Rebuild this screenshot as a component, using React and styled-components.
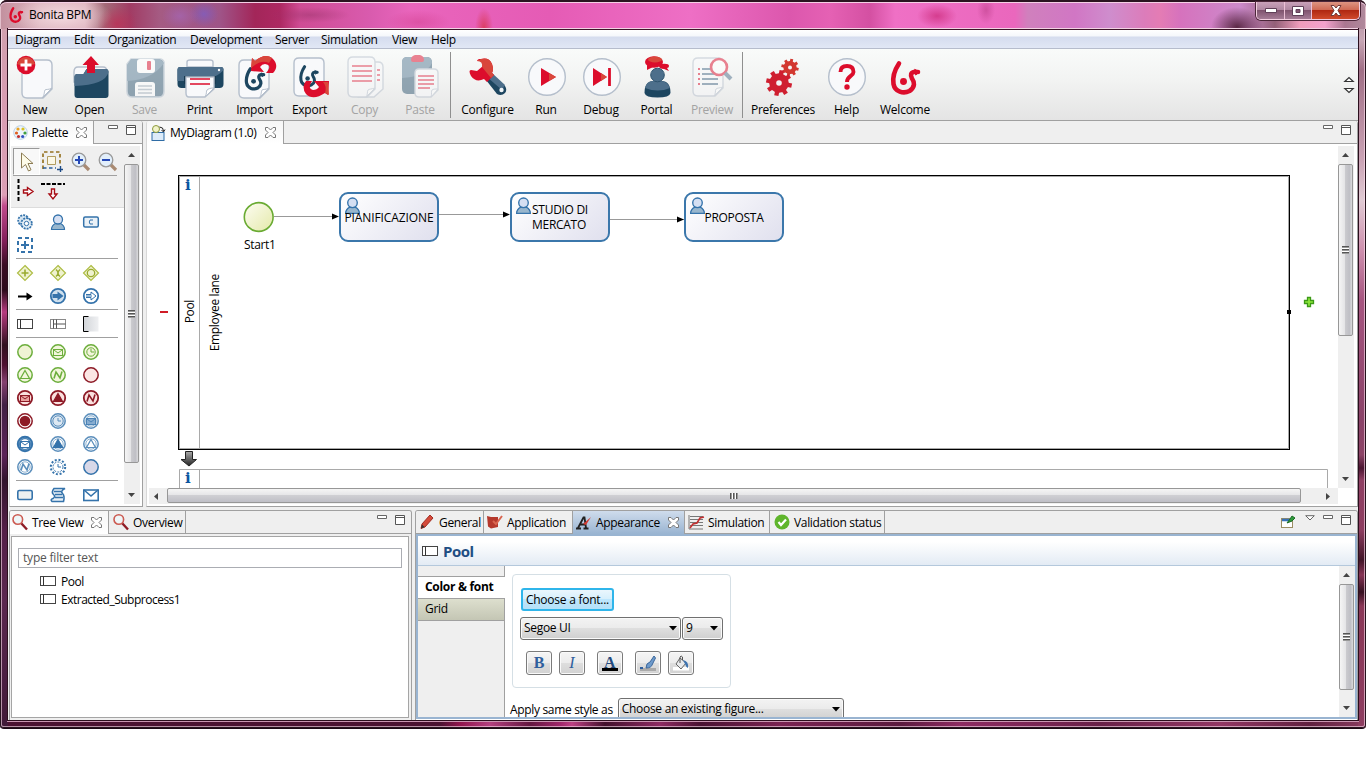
import React from "react";
import styled, { createGlobalStyle, css } from "styled-components";

const Global = createGlobalStyle`
  * { box-sizing: border-box; }
  body { margin: 0; background: #fff; overflow: hidden; font-family: "Open Sans", "Noto Sans", sans-serif; font-size: 12px; color: #000; }
  svg { display: block; flex: none; overflow: visible; }
`;

/* ---------- window frame ---------- */
const Window = styled.div`
  width: 1366px;
  height: 729px;
  display: flex;
  flex-direction: column;
  border-radius: 7px 7px 4px 4px;
  padding: 0 8px 8px;
  border-bottom: 1px solid #1c0714;
  box-shadow: inset 0 0 0 1px #25131d, inset 0 0 0 2px rgba(255, 225, 240, 0.6);
  background:
    linear-gradient(#cfa2ae 0, #d79db1 90px, #dca0b6 195px, #c04b8c 206px, #84205b 240px, #3a0d24 265px, #2c0a1b 290px, #b63b7f 312px, #30101f 345px, #4e1131 365px, #84406f 382px, #412045 405px, #5b2358 455px, #32142d 480px, #552048 530px, #5b2850 600px, #411a38 728px) 0 0 / 8px 100% no-repeat,
    linear-gradient(#b08a9c 0, #c7a7b5 40px, #a06f86 70px, #caa3b5 160px, #e0cbd4 200px, #ce90ae 250px, #a65580 300px, #8a4268 420px, #8c4366 455px, #4a1531 468px, #8f3f63 480px, #8d3d60 530px, #401427 560px, #863455 575px, #351020 592px, #8a3757 606px, #8d3d60 728px) 100% 0 / 8px 100% no-repeat,
    linear-gradient(90deg, #4b1231 0, #4b1231 440px, #91144d 460px, #b3407f 490px, #64163f 530px, #a0266a 560px, #bd4183 572px, #43102c 605px, #8e2b62 660px, #4a1232 700px, #7a2352 780px, #5b1a3e 900px, #8e2b62 960px, #692048 1100px, #933764 1220px, #60203f 1310px, #8a3c60 1366px);
`;
const TitleBar = styled.header`
  height: 29px;
  flex: none;
  margin: 0 -8px;
  padding: 0 6px 0 9px;
  display: flex;
  align-items: flex-start;
  border-radius: 7px 7px 0 0;
  border-top: 2px solid #2b1420;
  box-shadow: inset 0 1px 0 #f5cfe5, inset 1px 0 0 #e2bfcb, inset -1px 0 0 #e2bfcb;
  background:
    radial-gradient(ellipse 50px 20px at 62px 14px, rgba(248, 226, 230, 0.85), transparent),
    radial-gradient(ellipse 20px 18px at 117px 22px, rgba(190, 45, 85, 0.75), transparent),
    radial-gradient(ellipse 18px 13px at 180px 14px, rgba(165, 105, 190, 0.6), transparent),
    radial-gradient(ellipse 15px 13px at 204px 12px, rgba(120, 95, 205, 0.65), transparent),
    radial-gradient(ellipse 40px 8px at 310px 13px, rgba(150, 50, 105, 0.45), transparent),
    radial-gradient(ellipse 9px 20px at 484px 26px, rgba(215, 50, 70, 0.75), transparent),
    radial-gradient(ellipse 32px 12px at 418px 20px, rgba(214, 70, 150, 0.6), transparent),
    radial-gradient(ellipse 20px 12px at 937px 14px, rgba(205, 45, 125, 0.75), transparent),
    radial-gradient(ellipse 9px 14px at 986px 8px, rgba(190, 65, 140, 0.6), transparent),
    radial-gradient(ellipse 26px 20px at 1237px 25px, rgba(80, 30, 55, 0.9), transparent),
    linear-gradient(90deg, #c2909e 0, #dcb3bd 40px, #dcb0bc 85px, #a36a78 105px, #a13c64 130px, #a55b83 160px, #9f5488 220px, #a32659 255px, #ad2862 280px, #cf4c94 300px, #d95bae 370px, #e965bc 410px, #e55bb5 550px, #ee6fc5 690px, #dc57ad 790px, #e561b4 830px, #d450a2 870px, #ef70c5 895px, #ea67bd 1015px, #d080bd 1028px, #d176c4 1075px, #cf8dcd 1110px, #dc7cba 1145px, #e47cb4 1160px, #d672bd 1180px, #cc8acb 1240px, #946078 1275px, #ef9dbc 1300px, #f2a1cc 1325px, #aa7690 1345px, #b08a9c 1366px);
`;
const TitleText = styled.div`
  display: flex;
  gap: 6px;
  padding-top: 5px;
  line-height: 16px;
  flex: 1;
  letter-spacing: -0.3px;
`;
const WinButtons = styled.div`
  display: flex;
  height: 18px;
  border: 1px solid #f3cfe0;
  border-top: 0;
  border-radius: 0 0 5px 5px;
  box-shadow: 0 0 0 1px #4b2639;
  overflow: hidden;
`;
const WinButton = styled.div`
  width: ${(p) => p.$w}px;
  display: flex;
  justify-content: center;
  align-items: center;
  border-left: ${(p) => (p.$first ? 0 : 1)}px solid #ecc0d6;
  background: ${(p) =>
    p.$close
      ? "linear-gradient(#dd9482 0, #cf6a55 45%, #b02812 50%, #d04a2c 100%)"
      : "linear-gradient(#c9a1b9 0, #b088a2 45%, #80546f 50%, #a57c96 100%)"};
`;
const Client = styled.main`
  flex: 1;
  min-height: 0;
  display: flex;
  flex-direction: column;
  background: #efefef;
  border-top: 1px solid #3c1428;
  box-shadow: 0 -1px 0 #f3d3e4, 0 0 0 1px #2b0f1d, 0 1px 0 1px #c995b1;
`;

/* ---------- menu and toolbar ---------- */
const MenuBar = styled.nav`
  height: 19px;
  flex: none;
  display: flex;
  padding-left: 7px;
  line-height: 20px;
  letter-spacing: -0.3px;
  background: linear-gradient(#fff 0, #f5f7fb 6px, #d5dcee 7px, #e1e7f5 18px);
  border-bottom: 1px solid #b6bccc;
`;
const MenuItem = styled.span`
  width: ${(p) => p.$w}px;
  white-space: nowrap;
`;
const ToolBar = styled.div`
  height: 72px;
  flex: none;
  display: flex;
  align-items: flex-start;
  background: linear-gradient(#f9fbfa, #f2f3f2 45%, #e4e4e4);
  border-bottom: 1px solid #a0a0a0;
`;
const Tool = styled.div`
  width: ${(p) => p.$w}px;
  padding-top: 6px;
  display: flex;
  flex-direction: column;
  align-items: center;
  gap: 3px;
  line-height: 16px;
  white-space: nowrap;
  letter-spacing: -0.25px;
  color: ${(p) => (p.$off ? "#a3a3a3" : "#000")};
  svg { opacity: ${(p) => (p.$off ? 0.5 : 1)}; }
`;
const ToolSep = styled.div`
  width: 1px;
  height: 66px;
  margin: 3px ${(p) => p.$r}px 0 ${(p) => p.$l}px;
  background: #8f8f8f;
`;
const ToolScroll = styled.div`
  margin-left: auto;
  padding: 28px 4px 0 0;
`;

/* ---------- panels ---------- */
const TopArea = styled.div`
  display: flex;
  gap: 3px;
  height: 386px;
  flex: none;
  padding-left: 1px;
`;
const BottomArea = styled.div`
  display: flex;
  gap: 3px;
  flex: 1;
  padding: 3px 0 0 1px;
  min-height: 0;
`;
const Panel = styled.section`
  width: ${(p) => p.$w}px;
  flex: none;
  display: flex;
  flex-direction: column;
  border: 1px solid #a0a0a0;
  border-left-color: ${(p) => (p.$plain ? "#d8d8d8" : "#a0a0a0")};
  border-top-width: ${(p) => (p.$plain ? 0 : 1)}px;
  border-bottom-width: ${(p) => (p.$open ? 0 : 1)}px;
  border-radius: 3px 3px 0 0;
  background: ${(p) => p.$bg || "#fff"};
  overflow: hidden;
`;
const TabStrip = styled.div`
  display: flex;
  flex: none;
  height: 23px;
  background: linear-gradient(#a0a0a0, #a0a0a0) 0 100% / 100% 1px no-repeat #efefef;
`;
const Tab = styled.div`
  width: ${(p) => p.$w}px;
  height: ${(p) => (p.$on ? 23 : 22)}px;
  flex: none;
  display: flex;
  align-items: center;
  gap: ${(p) => p.$gap || 4}px;
  padding-left: ${(p) => p.$pl || 3}px;
  border-right: 1px solid #a0a0a0;
  white-space: nowrap;
  letter-spacing: -0.33px;
  background: ${(p) => (p.$blue ? "linear-gradient(#cfdcec, #99b4d1)" : p.$on ? "linear-gradient(#f6f6f6, #fff)" : "transparent")};
  svg:last-child { margin-left: ${(p) => (p.$closable ? 4 : 0)}px; }
`;
const TabTools = styled.div`
  margin-left: auto;
  display: flex;
  gap: ${(p) => p.$gap || 8}px;
  padding: 4px ${(p) => p.$pr || 6}px 0 0;
`;

/* ---------- scroll bars ---------- */
const Bar = styled.div`
  flex: none;
  display: flex;
  flex-direction: ${(p) => (p.$h ? "row" : "column")};
  ${(p) => (p.$h ? css`height: 16px; width: ${p.$len}px;` : css`width: 16px; height: ${p.$len}px;`)}
  background: #efefef;
`;
const BarArrow = styled.div`
  flex: none;
  width: ${(p) => (p.$h ? 18 : 16)}px;
  height: ${(p) => (p.$h ? 16 : 18)}px;
  display: flex;
  align-items: center;
  justify-content: center;
`;
const Thumb = styled.div`
  flex: none;
  display: flex;
  align-items: center;
  justify-content: center;
  border: 1px solid #979797;
  border-radius: 2px;
  ${(p) =>
    p.$h
      ? css`width: ${p.$size}px; height: 15px; background: linear-gradient(#f5f5f5, #e6e6e8 45%, #cfcfd3 50%, #bfbfc6);`
      : css`height: ${p.$size}px; width: 15px; background: linear-gradient(90deg, #f5f5f5, #e4e4e6 45%, #cacace 50%, #bfbfc5 80%, #dadadc);`}
`;
const Grip = styled.div`
  ${(p) =>
    p.$h
      ? css`width: 8px; height: 6px; background: repeating-linear-gradient(90deg, #555 0 1px, #999 1px 2px, #fff 2px 3px);`
      : css`height: 8px; width: 7px; background: repeating-linear-gradient(#555 0 1px, #999 1px 2px, #fff 2px 3px);`}
`;
const Spacer = styled.div`
  flex: 1;
`;
function Scroll({ h, len, size }) {
  return (
    <Bar $h={h} $len={len}>
      <BarArrow $h={h}>
        <svg width="8" height="7"><path d={h ? "M4 0v7L0 3.500z" : "M0 5h7L3.500 1z"} fill="#444" /></svg>
      </BarArrow>
      <Thumb $h={h} $size={size}><Grip $h={h} /></Thumb>
      <Spacer />
      <BarArrow $h={h}>
        <svg width="8" height="7"><path d={h ? "M1 0v7l4-3.500z" : "M0 1h7L3.500 5z"} fill="#444" /></svg>
      </BarArrow>
    </Bar>
  );
}

/* ---------- palette ---------- */
const PaletteBody = styled.div`
  display: flex;
  padding: 2px 0 0 1px;
  height: 360px;
`;
const PaletteCol = styled.div`
  width: 113px;
  overflow: hidden;
`;
const PaletteTools = styled.div`
  height: 62px;
  background: #efefef;
  border-bottom: 1px solid #dcdcdc;
  padding: 2px 0 0 2px;
`;
const ToolRow = styled.div`
  display: flex;
  height: 28px;
  width: 104px;
  border-bottom: ${(p) => (p.$line ? 1 : 0)}px solid #a0a0a0;
  margin-left: ${(p) => (p.$line ? 0 : 4)}px;
  gap: ${(p) => (p.$line ? 0 : 6)}px;
`;
const ToolCell = styled.div`
  width: 27px;
  height: 27px;
  flex: none;
  display: flex;
  align-items: center;
  justify-content: center;
  ${(p) => p.$on && css`background: #f8f8f8; border: 1px solid #999; border-right-color: #fff; border-bottom-color: #fff;`}
`;
const PaletteSection = styled.div`
  margin: 0 0 0 5px;
  width: 102px;
  padding: 2px 0 2px 1px;
  display: grid;
  grid-template-columns: repeat(3, 33px);
  grid-auto-rows: 23px;
  border-top: 1px solid ${(p) => (p.$first ? "transparent" : "#a0a0a0")};
  margin-top: ${(p) => (p.$first ? -1 : 0)}px;
`;
const Cell = styled.div`
  padding-top: 4px;
`;

/* ---------- diagram ---------- */
const EditorBody = styled.div`
  display: flex;
  flex-direction: column;
  padding: 2px 0 0 0;
`;
const EditorRow = styled.div`
  display: flex;
  height: 342px;
`;
const Canvas = styled.div`
  position: relative;
  width: 1191px;
  height: 342px;
  overflow: hidden;
`;
const CanvasLines = styled.svg`
  position: absolute;
  left: 0;
  top: 0;
`;
const Task = styled.div`
  position: absolute;
  left: ${(p) => p.$x}px;
  top: 46px;
  width: 100px;
  height: 50px;
  border: 2px solid #3b77ab;
  border-radius: 9px;
  background: linear-gradient(135deg, #fff, #e0e0ee);
  display: flex;
  align-items: center;
  justify-content: center;
  line-height: 15px;
  letter-spacing: ${(p) => p.$ls}px;
  white-space: pre;
  svg { position: absolute; left: 3px; top: 3px; }
  span { position: relative; }
`;
const CanvasText = styled.div`
  position: absolute;
  left: ${(p) => p.$x}px;
  top: ${(p) => p.$y}px;
  line-height: 16px;
  letter-spacing: -0.35px;
  white-space: nowrap;
  ${(p) => p.$vertical && css`writing-mode: vertical-rl; transform: rotate(180deg);`}
`;
const InfoMark = styled.div`
  position: absolute;
  left: 38px;
  top: ${(p) => p.$y}px;
  font: bold 15px/16px "DejaVu Serif", serif;
  color: #0b55a0;
`;

/* ---------- tree ---------- */
const TreeBox = styled.div`
  margin: 2px 2px 2px 1px;
  flex: 1;
  border: 1px solid #a5a5a5;
  background: #fff;
  padding: 11px 6px;
  letter-spacing: -0.5px;
`;
const Filter = styled.div`
  height: 20px;
  border: 1px solid #abadb3;
  padding-left: 4px;
  line-height: 18px;
  color: #555;
  letter-spacing: -0.2px;
  margin-bottom: 4px;
`;
const TreeRow = styled.div`
  height: 18px;
  padding-left: 22px;
  display: flex;
  align-items: center;
  gap: 5px;
`;

/* ---------- properties ---------- */
const PropFrame = styled.div`
  flex: 1;
  min-height: 0;
  border: 2px solid #99b4d1;
  display: flex;
  flex-direction: column;
  background: #fff;
  margin-bottom: 1px;
`;
const PropHead = styled.div`
  height: 30px;
  flex: none;
  display: flex;
  align-items: center;
  gap: 5px;
  padding: 0 0 0 4px;
  font-size: 15px;
  font-weight: 700;
  letter-spacing: -0.5px;
  color: #1f4e83;
  background: linear-gradient(#fff 20%, #e3ebf4);
  border-bottom: 1px solid #b4c8dc;
`;
const PropBody = styled.div`
  display: flex;
  flex: 1;
  min-height: 0;
  overflow: hidden;
`;
const SideTabs = styled.div`
  width: 87px;
  flex: none;
  padding-top: 10px;
  background: linear-gradient(#a0a0a0, #a0a0a0) 100% 0 / 1px 100% no-repeat #efefef;
`;
const SideTab = styled.div`
  height: 22px;
  border-top: 1px solid #a0a0a0;
  padding-left: 7px;
  line-height: 20px;
  font-weight: ${(p) => (p.$on ? 700 : 400)};
  letter-spacing: -0.3px;
  background: ${(p) => (p.$on ? "#fff" : "linear-gradient(#dddfce, #c4c6b4) 0 0 / 86px 100% no-repeat")};
  box-shadow: 0 1px 0 #a0a0a0;
`;
const PropMain = styled.div`
  flex: 1;
  padding: 8px 0 0 7px;
`;
const Group = styled.div`
  width: 219px;
  height: 114px;
  border: 1px solid #d5dfe5;
  border-radius: 4px;
  padding: 13px 7px 0;
`;
const FontButton = styled.div`
  width: 93px;
  height: 23px;
  margin: 0 0 6px 1px;
  border: 2px solid #2fb5ea;
  border-radius: 3px;
  background: linear-gradient(#eaf6fd, #d6effc 48%, #bde6fd 50%, #b5e0f7);
  line-height: 19px;
  text-align: center;
  letter-spacing: -0.25px;
  white-space: nowrap;
`;
const Row = styled.div`
  display: flex;
  align-items: center;
  gap: ${(p) => p.$gap || 0}px;
  margin: ${(p) => p.$m || 0};
  white-space: nowrap;
  line-height: 14px;
  letter-spacing: -0.33px;
`;
const Combo = styled.div`
  width: ${(p) => p.$w}px;
  height: 23px;
  flex: none;
  border: 1px solid #707070;
  border-radius: 3px;
  background: linear-gradient(#f3f3f3, #ebebeb 48%, #dedede 50%, #cfcfcf);
  box-shadow: inset 0 0 0 1px #fafafa;
  display: flex;
  justify-content: space-between;
  align-items: center;
  padding: 0 ${(p) => p.$pr || 3}px 1px 3px;
  letter-spacing: -0.3px;
`;
const IconButton = styled.div`
  width: 26px;
  height: 24px;
  margin-left: ${(p) => p.$ml}px;
  border: 1px solid #7b7b7b;
  border-radius: 3px;
  background: linear-gradient(#f5f5f5, #ececec 48%, #dedede 50%, #d2d2d2);
  box-shadow: inset 0 0 0 1px #fafafa;
  display: flex;
  align-items: center;
  justify-content: center;
  font: ${(p) => (p.$italic ? "italic" : "bold")} 16px/20px "Liberation Serif", serif;
  letter-spacing: 0;
  color: #2f5f9e;
`;

/* ---------- icons ---------- */
const RED = "#dc0d2c";
const NAVY = "#1d4660";
const SLATE = "#4d6f8b";
const PAGE = { fill: "#f8f9fb", stroke: "#b5bfcc", strokeWidth: 1.4 };

const Swirl = ({ c, w = 3.4 }) => (
  <g fill="none" stroke={c} strokeWidth={w} strokeLinecap="round" strokeLinejoin="round">
    <path d="M7 2.500C2 10 .5 17 1.500 23c1.500 8 10 10 16 7 6-4 5-9 2.500-12.500-2-3.500-1-6 2-6.500h4" />
    <path d="M23 8.500l4.500 2.300-3.500 3z" fill={c} strokeWidth="1" />
    <circle cx="11.500" cy="20.500" r={w * 0.75} fill={c} stroke="none" />
  </g>
);
const Gear = ({ x, y, r, hole, fill }) => (
  <g transform={`translate(${x} ${y})`} fill={fill}>
    {[0, 45, 90, 135].map((a) => (
      <rect key={a} x={-r * 0.22} y={-r * 1.32} width={r * 0.44} height={r * 2.64} transform={`rotate(${a + 12})`} />
    ))}
    <circle r={r} />
    <circle r={hole} fill="#f3f3f3" />
  </g>
);
const TOOL_ICONS = {
  New: (
    <>
      <path d="M14 5h20q5 0 5 5v24l-9 9H14q-5 0-5-5V10q0-5 5-5z" {...PAGE} />
      <path d="M39 33c-3 2-6 1-7 2s0 5-3 8z" fill="#fff" stroke="#b5bfcc" />
      <circle cx="13" cy="10" r="9.300" fill={RED} /><path d="M4 9a9.300 9.300 0 0 1 18 0q-10 4-18 0z" fill="#d9473b" />
      <path d="M7.500 10h11M13 4.500v11" stroke="#fff" strokeWidth="2.800" />
    </>
  ),
  Open: (
    <>
      <path d="M6 17q0-5 4-5h25q4 0 4 5v10H6z" {...PAGE} />
      <path d="M6.500 22q0-3 3-3h6l3-5h19q3 0 3 3v23q0 3-3 3h-28q-3 0-3-3z" fill={NAVY} />
      <path d="M6.500 22q0-3 3-3h6l3-5h19q3 0 3 3-3 13-34 14z" fill={SLATE} />
      <path d="M19 18V10h-4.500L23 1l8 9h-4v8z" fill={RED} />
    </>
  ),
  Save: (
    <>
      <path d="M8 4h29q3 0 4 3v29q0 6-5 6H9q-5 0-5-6V9z" fill="#315872" stroke="#a9b9c8" strokeWidth="1.500" />
      <path d="M4 10l4-6h29l4 4q-12 17-37 18z" fill="#577a94" />
      <rect x="14" y="4" width="18" height="14" rx="3" fill="#fff" /><rect x="24" y="6" width="4" height="9" rx="1" fill={RED} />
      <path d="M12 41V30q0-3 3-3h14q3 0 3 3v11z" fill="#fff" /><path d="M15 31h14M15 34.500h14M15 38h14" stroke="#9ba9b6" strokeWidth="1.300" />
    </>
  ),
  Print: (
    <>
      <path d="M9 12V7q0-2 3-2h20q3 0 3 2v5z" {...PAGE} />
      <path d="M2 12h41q2.500 0 2.500 3v14q0 4-4 4h-38q-4 0-4-4V15q0-3 2.500-3z" fill={NAVY} />
      <path d="M2 12h41q2.500 0 2.500 3c-8 10-26 11-46 11V15q0-3 2.500-3z" fill={SLATE} />
      <circle cx="41" cy="15" r="1.200" fill="#fff" />
      <path d="M6 21h32v8H6z" fill="#173a51" />
      <path d="M8 22h28v12l-9 8H11q-3 0-3-4z" {...PAGE} /><path d="M36 33c-4 0-6 1-7 2s0 4-2 7z" fill="#fff" stroke="#b5bfcc" />
      <path d="M12 24h20M12 29h20" stroke={RED} strokeWidth="1.500" />
    </>
  ),
  Import: (
    <>
      <path d="M11 5h20q5 0 5 5v24l-9 9H11q-5 0-5-5V10q0-5 5-5z" {...PAGE} />
      <path d="M36 33c-3 2-6 1-7 2s0 5-3 8z" fill="#fff" stroke="#b5bfcc" />
      <g transform="translate(12.500 12) scale(.7)"><Swirl c={NAVY} w={4.600} /></g>
      <path d="M19 3l3 3Q32-2 39 3c6 5 5 11 1 15h-7q7-8-1-9-3 0-5 3l4 5-13-1z" fill={RED} />
      <path d="M19 3l3 3Q32-2 39 3l-3 5q-8-4-18 5z" fill="#d9473b" />
    </>
  ),
  Export: (
    <>
      <path d="M11 3h20q5 0 5 5v24l-9 9H11q-5 0-5-5V8q0-5 5-5z" {...PAGE} />
      <g transform="translate(12 10) scale(.66)"><Swirl c={NAVY} w={4.600} /></g>
      <path d="M40 40l-3-2Q25 46 18 39q-5-7 0-13h6q-5 8 1 9 4 0 6-3l-5-6h15z" fill={RED} />
      <path d="M40 27l1 13-4-2q2-7-2-11z" fill="#d9473b" />
    </>
  ),
  Copy: (
    <>
      <path d="M15 7h20q5 0 5 5v22l-9 8H15z" {...PAGE} />
      <path d="M10 2h17q5 0 5 5v27l-8 8H10q-5 0-5-5V7q0-5 5-5z" {...PAGE} />
      <path d="M32 33c-3 1-6 1-7 2s0 5-2 7z" fill="#fff" stroke="#b5bfcc" />
      <path d="M9 11h20M9 16h20M9 21h20M9 26h20M34 15h3M34 20h3M34 25h3" stroke={RED} strokeWidth="1.600" />
    </>
  ),
  Paste: (
    <>
      <rect x="4" y="2" width="30" height="37" rx="5" fill="#315872" /><path d="M4 7q0-5 5-5h20q5 0 5 6-7 14-30 15z" fill="#577a94" />
      <path d="M13 5q0-4 4-5h5q4 1 4 5 0 2-2 2h-9q-2 0-2-2z" fill={RED} />
      <path d="M21 14h15q4 0 4 4v17l-7 7H21q-4 0-4-4V18q0-4 4-4z" {...PAGE} />
      <path d="M40 34c-3 0-5 0-6 1s0 4-1 7z" fill="#fff" stroke="#b5bfcc" />
      <path d="M20 21h16M20 25h16M20 29h16M20 33h12" stroke={RED} strokeWidth="1.500" />
    </>
  ),
  Configure: (
    <>
      <path d="M20 25l6-6 13 12q2.500 4 0 7-3.500 3.500-8 1z" fill={NAVY} /><path d="M21 22l5-4 13 12-3 5z" fill={SLATE} />
      <path d="M15 4q8-2 11 5 2 6 0 9l2 2-7 7-3-3q-8 4-13-3-3-6 0-6l6 1 6-5q1-6-6-5 0-1 2-2z" fill={RED} />
      <path d="M15 4q8-2 11 5 2 6 0 9l2 2-3 3-9-11q1-6-5-6z" fill="#d9473b" />
      <circle cx="35.500" cy="35" r="2.200" fill="#eef3f6" />
    </>
  ),
  Run: (
    <><circle cx="23" cy="22" r="18.300" fill="#f8f9fb" stroke="#b5bfcc" strokeWidth="1.400" /><path d="M17 13v18l15-9z" fill={RED} /><path d="M25 18v8l7-4z" fill="#d9473b" /></>
  ),
  Debug: (
    <><circle cx="23" cy="22" r="18.300" fill="#f8f9fb" stroke="#b5bfcc" strokeWidth="1.400" /><path d="M14 13v18l14-9z" fill={RED} /><path d="M22 18v8l6-4z" fill="#d9473b" /><path d="M30.500 13v18" stroke={RED} strokeWidth="2.800" /></>
  ),
  Portal: (
    <>
      <ellipse cx="19" cy="7" rx="9" ry="5.800" fill={RED} /><path d="M12 10l0 5 6-3zM26 9q8-1 8 2 0 2-2 2l2 3-5-2q-5 0-5-3z" fill={RED} /><ellipse cx="20" cy="4.500" rx="7" ry="3" fill="#d9473b" />
      <path d="M9.500 38q0-12 9-12h8q9 0 9 12-1 4.500-13 4.500T9.500 38z" fill={NAVY} /><path d="M10 33q2-7 8-7h8q6 0 9 7-12 5-25 0z" fill={SLATE} />
      <circle cx="22.500" cy="20" r="6.800" fill={SLATE} stroke="#2e536e" />
    </>
  ),
  Preview: (
    <>
      <path d="M8 3h20q5 0 5 5v25l-8 8H8q-5 0-5-5V8q0-5 5-5z" {...PAGE} /><path d="M33 32c-3 1-6 1-7 2s0 5-2 7z" fill="#fff" stroke="#b5bfcc" />
      <path d="M12 14h12M12 19h16M12 24h16M12 29h16" stroke={SLATE} strokeWidth="1.800" /><path d="M8 14h2M8 19h2M8 24h2M8 29h2" stroke={RED} strokeWidth="1.800" />
      <circle cx="29" cy="12" r="8" fill="#fff" stroke={RED} strokeWidth="2.600" /><path d="M35 18l6 6" stroke={SLATE} strokeWidth="4" />
    </>
  ),
  Preferences: (
    <><Gear x={29} y={12.500} r={6.600} hole={2} fill="#d2372f" /><Gear x={18} y={28} r={9.800} hole={2.800} fill="#cf1f30" /></>
  ),
  Help: (
    <><circle cx="22" cy="22" r="18.300" fill="#f8f9fb" stroke="#b5bfcc" strokeWidth="1.400" /><path d="M15.500 17q0-6 6.500-6t6.500 6c0 4-6.500 4-6.500 10" fill="none" stroke={RED} strokeWidth="3.900" /><circle cx="22" cy="32" r="2.700" fill={RED} /></>
  ),
  Welcome: <g transform="translate(9 6)"><Swirl c={RED} w={4.600} /></g>,
};

const G = "#6cae3c", R = "#8d1a26", B = "#3573ab";
const Ring = ({ c, f = "#fff", w = 1.500, dash }) => <circle cx="8" cy="8" r="7.200" fill={f} stroke={c} strokeWidth={w} strokeDasharray={dash} />;
const Mail = ({ c, f = "none" }) => <><rect x="3.500" y="5.500" width="9" height="6" fill={f} stroke={c} /><path d="M4 6l4 3L12 6" fill="none" stroke={c} /></>;
const Tri = ({ c, f = "none" }) => <path d="M8 3.500l4.500 8h-9z" fill={f} stroke={c} strokeWidth="1.200" />;
const Zig = ({ c }) => <path d="M4 11.500L6 5l4 6 2-6.500" fill="none" stroke={c} strokeWidth="1.600" />;
const Clock = ({ c }) => <><circle cx="8" cy="8" r="4.200" fill="none" stroke={c} /><path d="M8 8V5M8 8h3" stroke={c} /></>;
const Inner = ({ c }) => <circle cx="8" cy="8" r="5.200" fill="none" stroke={c} />;
const Person = () => (
  <><path d="M1.500 15.500c0-4 2-5 4-6h5c2 1 4 2 4 6z" fill="#98b6cd" stroke={B} strokeWidth="1.200" /><circle cx="8" cy="5.500" r="4.500" fill="#d5dff2" stroke={B} strokeWidth="1.300" /></>
);
const Diamond = ({ children }) => <><path d="M8 .5L15.500 8 8 15.500.5 8z" fill="#eff2cf" stroke="#aebd45" strokeWidth="1.200" />{children}</>;
const OLIVE = "#9aab30";
const P = {
  service: <><circle cx="6.500" cy="6.500" r="5.300" fill="#d5e4f0" stroke={B} strokeWidth="1.800" strokeDasharray="2 1" /><circle cx="9.500" cy="9.500" r="5.300" fill="#e2edf5" stroke={B} strokeWidth="1.800" strokeDasharray="2 1" /><circle cx="9.500" cy="9.500" r="2.200" fill="#fff" stroke={B} /></>,
  human: <Person />,
  call: <><rect x=".7" y="3" width="14.600" height="10" rx="1.500" fill="#eaf1f7" stroke={B} strokeWidth="1.500" /><path d="M10 6H7q-1.500 2 0 4h3" fill="none" stroke={B} /></>,
  sub: <><rect x="1" y="1" width="14" height="14" fill="none" stroke={B} strokeWidth="2" strokeDasharray="4 3" /><path d="M4 8h8M8 4v8" stroke={B} strokeWidth="2" /></>,
  and: <Diamond><path d="M4.500 8h7M8 4.500v7" stroke={OLIVE} strokeWidth="1.600" /></Diamond>,
  xor: <Diamond><path d="M6 4.500q4 3.500 0 7M10 4.500q-4 3.500 0 7" fill="none" stroke={OLIVE} strokeWidth="1.400" /></Diamond>,
  or: <Diamond><circle cx="8" cy="8" r="3.700" fill="none" stroke={OLIVE} strokeWidth="1.300" /></Diamond>,
  arrow: <path d="M1 7.500h8.500V4.500L15.500 8.500 9.500 12.500v-3H1z" fill="#000" />,
  throwLink: <><Ring c={B} f="#cfe0ee" w={1.800} /><path d="M2.500 6h5V3.500L13.500 8l-6 4.500V10h-5z" fill={B} /></>,
  catchLink: <><Ring c={B} w={1.800} /><path d="M3 6.500h5V4L13 8l-5 4V9.500H3M3 8h6" fill="none" stroke={B} /></>,
  pool: <><rect x=".5" y="3.500" width="15" height="9" fill="#fff" stroke="#444" /><path d="M3.500 3.500v9" stroke="#333" /></>,
  lane: <><rect x=".5" y="3.500" width="15" height="9" fill="#fff" stroke="#8a8a8a" /><path d="M3.500 3.500v9M6.500 3.500v9M3.500 8h12" stroke="#555" /></>,
  note: <><defs><linearGradient id="ng"><stop stopColor="#d2d5d9" /><stop offset="1" stopColor="#eff0f2" /></linearGradient></defs><rect x=".5" y=".5" width="15" height="15" fill="url(#ng)" /><path d="M5.500.5H.5v15h5" fill="none" stroke="#000" /></>,
  start: <Ring c={G} f="#f0f3d4" />,
  gMail: <><Ring c={G} f="#f3f6dc" /><Mail c={G} /></>,
  gClock: <><Ring c={G} f="#f3f6dc" /><Clock c={G} /></>,
  gSignal: <><Ring c={G} f="#f3f6dc" /><Tri c={G} /></>,
  gError: <><Ring c={G} f="#f3f6dc" /><Zig c={G} /></>,
  end: <Ring c={R} f="#fbe6e4" />,
  rMail: <><Ring c={R} f="#fae1df" w={1.800} /><Mail c={R} f="#e9a3a0" /></>,
  rSignal: <><Ring c={R} f="#fae1df" w={1.800} /><Tri c={R} f={R} /></>,
  rError: <><Ring c={R} f="#fae1df" w={1.800} /><Zig c={R} /></>,
  term: <><Ring c={R} /><circle cx="8" cy="8" r="5.300" fill={R} /></>,
  bClock: <><Ring c="#5b8ebb" f="#dde8f2" /><Inner c="#5b8ebb" /><path d="M8 8V5M8 8h3" stroke="#5b8ebb" /></>,
  bMail: <><Ring c="#5b8ebb" f="#e9f0f6" /><Inner c="#8fb3d2" /><Mail c="#4b83b6" f="#86acd0" /></>,
  bMail2: <><Ring c={B} f="#7ea8cc" w={2} /><circle cx="8" cy="8" r="5.400" fill="#fff" stroke={B} /><Mail c={B} /></>,
  bSigF: <><Ring c="#5b8ebb" /><Inner c="#8fb3d2" /><Tri c={B} f={B} /></>,
  bSig: <><Ring c="#5b8ebb" /><Inner c="#8fb3d2" /><Tri c="#5b8ebb" /></>,
  bErr: <><Ring c="#5b8ebb" /><Inner c="#8fb3d2" /><Zig c="#5b8ebb" /></>,
  bDash: <><Ring c={B} dash="2 1.800" w={2} /><circle cx="8" cy="8" r="5" fill="none" stroke={B} strokeDasharray="2 1.200" /><path d="M8 8V5M8 8h3" stroke={B} /></>,
  blank: <Ring c={B} f="#d8d8e8" />,
  rect: <rect x=".8" y="3.500" width="14.400" height="9" rx="1.500" fill="#edf1f1" stroke={B} strokeWidth="1.600" />,
  script: <><path d="M4 1.500h11q-5 2.500-2.500 5t1 8H2q-2-2 1-3 3-2 .500-4T4 1.500z" fill="#e9f1f7" stroke={B} strokeWidth="1.600" /><path d="M4 4.500h7M5 7.500h7M5 10.500h8" stroke={B} strokeWidth="1.300" /></>,
  send: <><rect x=".8" y="3" width="14.400" height="10.500" fill="#fff" stroke={B} strokeWidth="1.600" /><path d="M1 3l7 6 7-6" fill="none" stroke={B} strokeWidth="1.600" /></>,
};
const SECTIONS = [
  ["service", "human", "call", "sub"],
  ["and", "xor", "or", "arrow", "throwLink", "catchLink"],
  ["pool", "lane", "note"],
  ["start", "gMail", "gClock", "gSignal", "gError", "end", "rMail", "rSignal", "rError", "term", "bClock", "bMail", "bMail2", "bSigF", "bSig", "bErr", "bDash", "blank"],
  ["rect", "script", "send"],
];
const Ico = ({ children, s = 16 }) => <svg width={s} height={s} viewBox="0 0 16 16">{children}</svg>;

const CloseX = ({ c = "#777" }) => (
  <svg width="11" height="11"><path d="M.5.5h2.500L5.500 3 8 .5h2.500V3L8 5.500l2.500 2.500v2.500H8L5.500 8 3 10.500H.5V8L3 5.500.5 3z" fill="#fff" stroke={c} /></svg>
);
const MinIcon = () => <svg width="10" height="11"><path d="M.5.5h9v3h-9z" fill="#fff" stroke="#666" /></svg>;
const MaxIcon = () => <svg width="10" height="11"><path d="M.5.5h9v9h-9zM.5 2.500h9" fill="#fff" stroke="#555" /></svg>;
const Lens = () => (
  <svg width="16" height="17"><path d="M9 9l6 6.500" stroke="#8e1c26" strokeWidth="2.400" /><circle cx="5.800" cy="5.500" r="4.800" fill="#eef6f8" stroke="#cc5b52" strokeWidth="1.600" /></svg>
);
const Plus = ({ minus }) => (
  <svg width="20" height="20"><path d="M12 12l6 6" stroke="#a98a72" strokeWidth="3.200" /><circle cx="8" cy="8" r="6.800" fill="#e2effb" stroke="#999" strokeWidth="1.300" /><path d={minus ? "M4 8h8" : "M4 8h8M8 4v8"} stroke="#2548b5" strokeWidth="2" /></svg>
);
const Caret = () => <svg width="8" height="5"><path d="M0 0h8L4 4.500z" fill="#000" /></svg>;

const MENUS = [["Diagram", 59], ["Edit", 34], ["Organization", 82], ["Development", 85], ["Server", 46], ["Simulation", 71], ["View", 39], ["Help", 40]];
const TOOLS = [
  ["New", 54], ["Open", 55], ["Save", 55, 1], ["Print", 55], ["Import", 55], ["Export", 55], ["Copy", 55, 1], ["Paste", 56, 1],
  [null, 2, 3],
  ["Configure", 67], ["Run", 50], ["Debug", 60], ["Portal", 51], ["Preview", 60, 1],
  [null, 0, 0],
  ["Preferences", 80], ["Help", 47], ["Welcome", 70],
];

function Toolbar() {
  return (
    <ToolBar>
      {TOOLS.map(([name, a, b], i) =>
        name ? (
          <Tool key={i} $w={a} $off={b}>
            <svg width="44" height="44" viewBox="0 0 44 44">{TOOL_ICONS[name]}</svg>
            {name}
          </Tool>
        ) : (
          <ToolSep key={i} $l={a} $r={b} />
        )
      )}
      <ToolScroll>
        <svg width="10" height="17"><path d="M.8 4.500h8.400L5 .5zM.8 11.500h8.400L5 15.500z" fill="#fff" stroke="#333" strokeWidth="1.200" /></svg>
      </ToolScroll>
    </ToolBar>
  );
}

function Palette() {
  return (
    <Panel $w={134} $plain>
      <TabStrip>
        <Tab $w={84} $on $closable $gap={3.500}>
          <svg width="15" height="15"><circle cx="7.500" cy="7.500" r="6.800" fill="#eef5fb" stroke="#b9d0e6" /><circle cx="5" cy="4" r="1.600" fill="#e8a020" /><circle cx="10" cy="4" r="1.600" fill="#d8c020" /><circle cx="3.500" cy="8" r="1.600" fill="#e06020" /><circle cx="12" cy="8" r="1.600" fill="#40a040" /><circle cx="5.500" cy="11.500" r="1.600" fill="#c03030" /><circle cx="9.700" cy="11.500" r="1.600" fill="#3050c0" /></svg>
          Palette<CloseX />
        </Tab>
        <TabTools><MinIcon /><MaxIcon /></TabTools>
      </TabStrip>
      <PaletteBody>
        <PaletteCol>
          <PaletteTools>
            <ToolRow $line>
              <ToolCell $on><svg width="14" height="20"><path d="M1.500 1v15l4-3.500 3 6.500 2.500-1.200L8 11.500h5z" fill="#fdfbe8" stroke="#8c7c54" /></svg></ToolCell>
              <ToolCell><svg width="23" height="22"><path d="M1 18V1h17v13" fill="none" stroke="#957222" strokeWidth="1.700" strokeDasharray="3.500 2.500" /><path d="M1 17h13" stroke="#2a5d9a" strokeWidth="1.700" strokeDasharray="3.500 2.500" /><path d="M5.500 5.500h8v8h-8z" fill="#fbf7e6" stroke="#b29c5e" /><path d="M15 18.500h6M18.500 15v6" stroke="#1c4a87" strokeWidth="1.400" /></svg></ToolCell>
              <ToolCell><Plus /></ToolCell>
              <ToolCell><Plus minus /></ToolCell>
            </ToolRow>
            <ToolRow>
              <svg width="18" height="28"><path d="M1.500 3v24" stroke="#000" strokeWidth="2" strokeDasharray="4 2" /><path d="M6.500 14h4v-2.500L16 15.500l-5.500 4V17h-4z" fill="#fff" stroke="#a80d15" strokeWidth="1.400" /></svg>
              <svg width="26" height="28"><path d="M0 8h24" stroke="#000" strokeWidth="2" strokeDasharray="4 1.500" /><path d="M10.500 13h3v5h2.500L12 23l-4-5h2.500z" fill="#fff" stroke="#a80d15" strokeWidth="1.400" /></svg>
            </ToolRow>
          </PaletteTools>
          {SECTIONS.map((s, i) => (
            <PaletteSection key={i} $first={i === 0}>
              {s.map((n) => <Cell key={n}><Ico>{P[n]}</Ico></Cell>)}
            </PaletteSection>
          ))}
        </PaletteCol>
        <Scroll len={358} size={299} />
      </PaletteBody>
    </Panel>
  );
}

const TASKS = [
  { x: 192, text: "PIANIFICAZIONE", ls: -0.1 },
  { x: 363, text: "STUDIO DI\nMERCATO", ls: -0.3 },
  { x: 537, text: "PROPOSTA", ls: -0.3 },
];

function Editor() {
  return (
    <Panel $w={1212} $plain>
      <TabStrip>
        <Tab $w={137} $on $closable $pl={4}>
          <svg width="15" height="16"><rect x="1" y="7.500" width="12" height="8" fill="#dcebf9" stroke="#2f6ca5" /><circle cx="5" cy="4" r="3.500" fill="#f1f3c9" stroke="#8d9a3b" /><path d="M8.500 2q4 0 4 4M10.500 5l2 2 1.500-2.500" fill="none" stroke="#222" /></svg>
          MyDiagram (1.0)<CloseX />
        </Tab>
        <TabTools $gap={8}><MinIcon /><MaxIcon /></TabTools>
      </TabStrip>
      <EditorBody>
        <EditorRow>
          <Canvas>
            <CanvasLines width="1191" height="342">
              <rect x="31.500" y="29.500" width="1111" height="274" fill="#fff" stroke="#000" />
              <path d="M32.500 303V30.500H1141.500V302.500H32.500M52.500 30v272M32.500 342V323.500H1180.500V342M52.500 324v18" fill="none" stroke="#a9a9a9" />
              <rect x="1140" y="164" width="4" height="4" fill="#000" />
              <path d="M127 70.500h64M291 68.500h71M462 73.500h75" stroke="#999" />
              <path d="M185 67.500l7 3-7 3zM356 65.500l7 3-7 3zM530 70.500l7 3-7 3z" fill="#000" />
              <defs>
                <linearGradient id="sg" x2="1" y2="1"><stop stopColor="#fdfdf3" /><stop offset="1" stopColor="#e4e9a9" /></linearGradient>
                <linearGradient id="ag" x2="0" y2="1"><stop stopColor="#aaa" /><stop offset="1" stopColor="#222" /></linearGradient>
              </defs>
              <circle cx="111.700" cy="71" r="14.400" fill="url(#sg)" stroke="#6aab33" strokeWidth="1.600" />
              <path d="M38.500 305.500h7v8h4L42 320l-8-6.500h4.500z" fill="url(#ag)" stroke="#222" />
              <path d="M13 166h8" stroke="#d01c26" strokeWidth="2" />
              <path d="M1160.500 151.500h3v3h3v3h-3v3h-3v-3h-3v-3h3z" fill="#8ee83b" stroke="#3c9a17" strokeWidth="1.300" />
            </CanvasLines>
            <InfoMark $y={31}>i</InfoMark>
            <InfoMark $y={324}>i</InfoMark>
            <CanvasText $x={97} $y={91}>Start1</CanvasText>
            <CanvasText $x={35} $y={154} $vertical>Pool</CanvasText>
            <CanvasText $x={60} $y={128} $vertical>Employee lane</CanvasText>
            {TASKS.map((t) => (
              <Task key={t.text} $x={t.x} $ls={t.ls}>
                <Ico s={17}><Person /></Ico>
                <span>{t.text}</span>
              </Task>
            ))}
          </Canvas>
          <Scroll len={342} size={172} />
        </EditorRow>
        <Row $m="0 0 0 2px"><Scroll h len={1189} size={1134} /></Row>
      </EditorBody>
    </Panel>
  );
}

function Tree() {
  return (
    <Panel $w={403} $open $bg="#efefef">
      <TabStrip>
        <Tab $w={99} $on $closable $pl={2}><Lens />Tree View<CloseX /></Tab>
        <Tab $w={77} $pl={4}><Lens />Overview</Tab>
        <TabTools $pr={6}><MinIcon /><MaxIcon /></TabTools>
      </TabStrip>
      <TreeBox>
        <Filter>type filter text</Filter>
        <TreeRow><Ico>{P.pool}</Ico>Pool</TreeRow>
        <TreeRow><Ico>{P.pool}</Ico>Extracted_Subprocess1</TreeRow>
      </TreeBox>
    </Panel>
  );
}

function Properties() {
  return (
    <Panel $w={943} $open>
      <TabStrip>
        <Tab $w={68}><Ico><path d="M3 10L11 1l3 3-8 9-4 1.500z" fill="#d44a3a" stroke="#a22c22" /><path d="M2 14.500l1-4 2.500 2.500z" fill="#333" /></Ico>General</Tab>
        <Tab $w={89}><Ico><path d="M0 2l4 1h7v10l-7 1.500-3-2z" fill="#b5382c" /><path d="M6 7l3 3 6-8" fill="none" stroke="#d9654f" strokeWidth="2" /></Ico>Application</Tab>
        <Tab $w={112} $on $blue $closable><Ico><path d="M2 13L7.500 2.500h1L10 13M4.500 9.500h5M0 13.500h5M7.500 13.500h5" fill="none" stroke="#222" strokeWidth="1.800" /><path d="M7 9l8-7-5 8z" fill="#d23a30" /></Ico>Appearance<CloseX /></Tab>
        <Tab $w={85}><Ico><path d="M1 1v14h14M2 2.500h13M2 5.500h13M2 8.500h13M2 11.500h13" stroke="#777" fill="none" /><path d="M2 14l3-4 4-1 3-5 4-1" stroke="#c22f2f" fill="none" strokeWidth="1.600" /></Ico>Simulation</Tab>
        <Tab $w={115} $pl={4}><Ico><circle cx="8" cy="8" r="7.500" fill="#5fb52c" /><path d="M4.500 8l2.500 3 5-5.500" fill="none" stroke="#fff" strokeWidth="2.200" /></Ico>Validation status</Tab>
        <TabTools>
          <svg width="16" height="14"><rect x=".5" y="3.500" width="11" height="9" fill="#fff" stroke="#9a8d63" /><path d="M1 5h10" stroke="#3a72b8" strokeWidth="2.500" /><path d="M6 8l3-4 2-3 3 2-3 3z" fill="#2f9a3b" stroke="#1b6b26" /></svg>
          <svg width="10" height="8"><path d="M.7.7h8.600L5 5z" fill="#fff" stroke="#666" /></svg>
          <MinIcon /><MaxIcon />
        </TabTools>
      </TabStrip>
      <PropFrame>
        <PropHead><Ico>{P.pool}</Ico>Pool</PropHead>
        <PropBody>
          <SideTabs>
            <SideTab $on>Color &amp; font</SideTab>
            <SideTab>Grid</SideTab>
          </SideTabs>
          <PropMain>
            <Group>
              <FontButton>Choose a font...</FontButton>
              <Row $gap={1}><Combo $w={161}>Segoe UI<Caret /></Combo><Combo $w={41} $pr={4}>9<Caret /></Combo></Row>
              <Row $m="11px 0 0 6px">
                <IconButton $ml={0}>B</IconButton>
                <IconButton $ml={7} $italic>I</IconButton>
                <IconButton $ml={12}><svg width="16" height="18"><text x="2" y="14" fontSize="16" fill="#234a7d">A</text><path d="M0 14h16v3H0z" fill="#000" /></svg></IconButton>
                <IconButton $ml={12}><svg width="16" height="16"><path d="M0 13h16v3H0z" fill="#aaa" /><path d="M6 13q0-5 4-6l4-6 1.500 2-3 6q-1 4-6.500 4z" fill="#6d9acb" stroke="#3c689c" /><path d="M0 13h3" stroke="#2f5f9e" strokeWidth="2" /></svg></IconButton>
                <IconButton $ml={7}><svg width="16" height="16"><path d="M0 12h16v3.500H0z" fill="#fff" /><path d="M7 3l6 5-5 6-5-5z" fill="#e8eaec" stroke="#666" /><path d="M7 8V2q1-2 2.500 0v3" fill="none" stroke="#555" /><path d="M10 5q6 1 5 8-2-1-3-4z" fill="#3f74b0" /></svg></IconButton>
              </Row>
            </Group>
            <Row $gap={5} $m="10px 0 0 -2px">Apply same style as<Combo $w={226}>Choose an existing figure...<Caret /></Combo></Row>
          </PropMain>
          <Scroll len={151} size={106} />
        </PropBody>
      </PropFrame>
    </Panel>
  );
}

export default function App() {
  return (
    <>
      <Global />
      <Window>
        <TitleBar>
          <TitleText>
            <svg width="14" height="16" viewBox="-2 0 30 34"><Swirl c={RED} w={5} /></svg>
            Bonita BPM
          </TitleText>
          <WinButtons>
            <WinButton $w={27} $first><svg width="12" height="5"><path d="M.5.5h11v4H.5z" fill="#fff" stroke="#604058" /></svg></WinButton>
            <WinButton $w={27}><svg width="12" height="10"><path d="M.5.5h11v9H.5zM4 3.500h4v3H4z" fill="#fff" fillRule="evenodd" stroke="#604058" /></svg></WinButton>
            <WinButton $w={48} $close><svg width="12" height="11"><path d="M1 .5h3l2 2.500L8 .5h3L8 5.500l3 5H8L6 8l-2 2.500H1l3-5z" fill="#fff" stroke="#703a3a" /></svg></WinButton>
          </WinButtons>
        </TitleBar>
        <Client>
          <MenuBar>{MENUS.map(([m, w]) => <MenuItem key={m} $w={w}>{m}</MenuItem>)}</MenuBar>
          <Toolbar />
          <TopArea><Palette /><Editor /></TopArea>
          <BottomArea><Tree /><Properties /></BottomArea>
        </Client>
      </Window>
    </>
  );
}
